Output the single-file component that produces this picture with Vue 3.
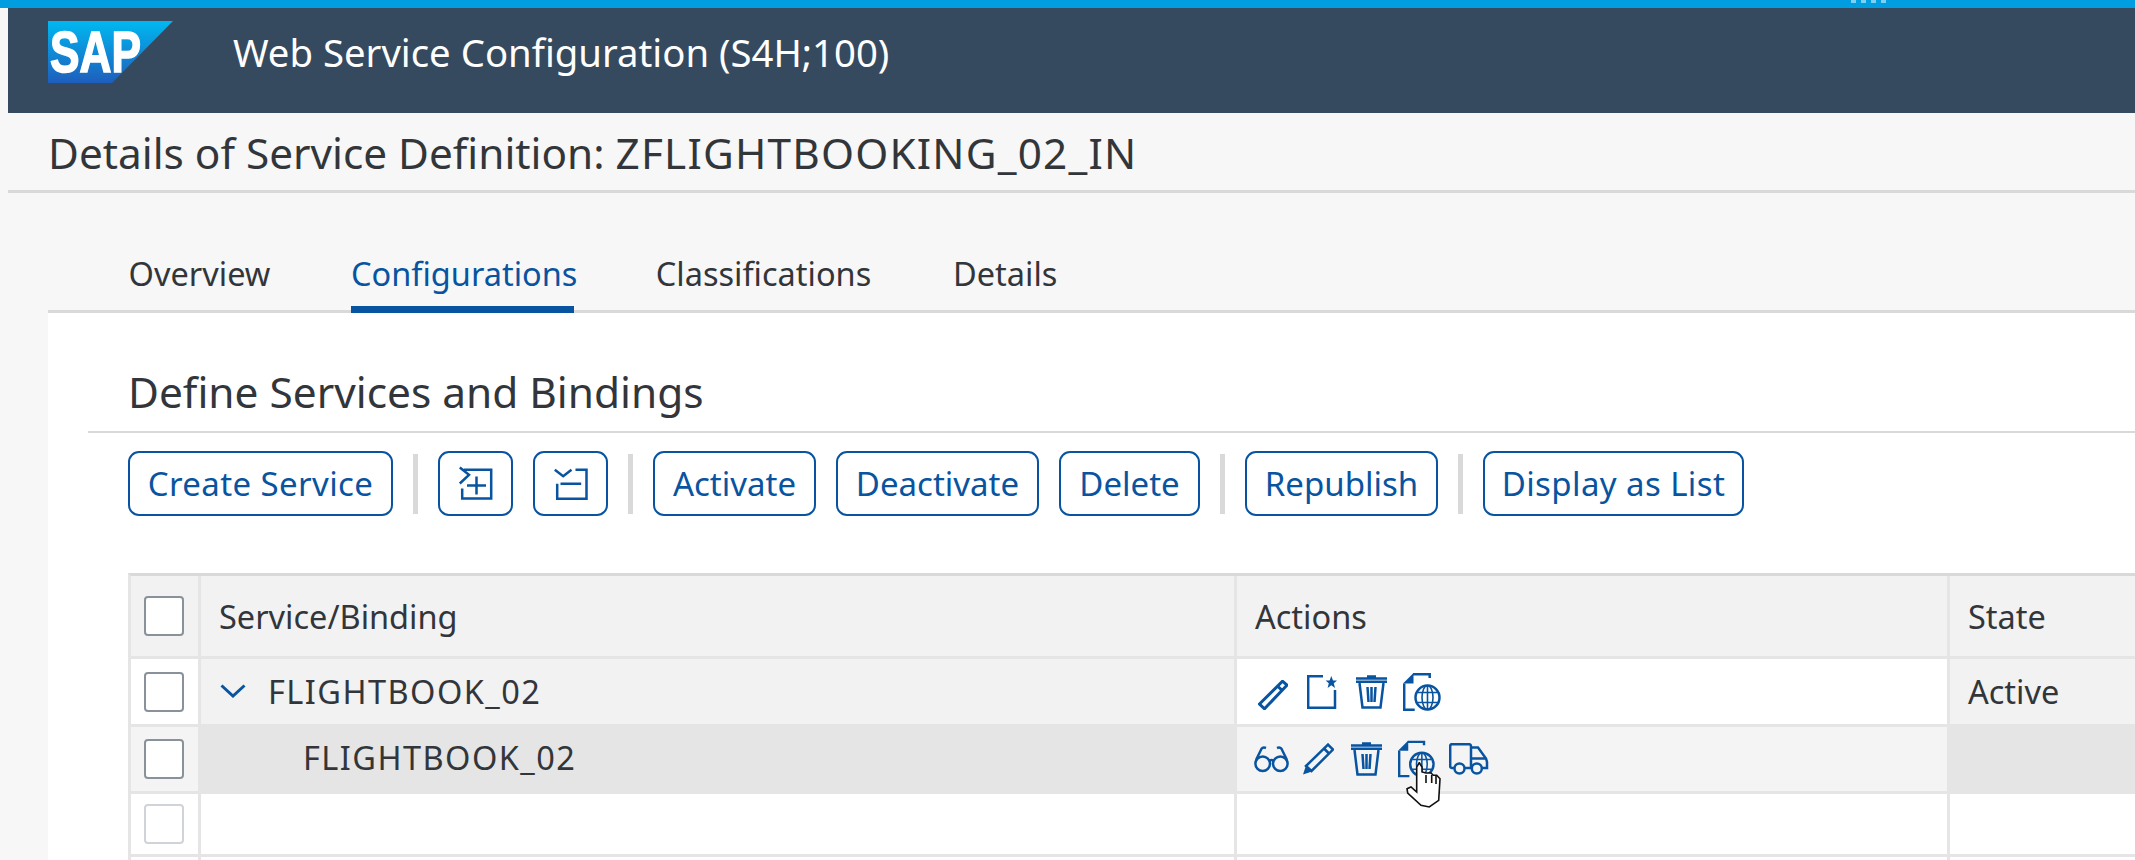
<template>
  <div class="page">
    <div class="accent">
      <span v-for="n in 4" :key="n" class="dot"></span>
    </div>

    <header class="shell">
      <svg class="logo" width="125" height="62" viewBox="0 0 125 62">
        <defs>
          <linearGradient id="sapBlue" x1="0" y1="0" x2="0" y2="1">
            <stop offset="0" stop-color="#00b8f1" />
            <stop offset="1" stop-color="#1e5ebc" />
          </linearGradient>
        </defs>
        <polygon points="0,0 125,0 64,62 0,62" fill="url(#sapBlue)" />
        <text x="2" y="50.5" class="logo-text" textLength="91" lengthAdjust="spacingAndGlyphs">SAP</text>
      </svg>
      <div class="shell-title">Web Service Configuration (S4H;100)</div>
    </header>

    <div class="subheader">Details of Service Definition: <span class="caps">ZFLIGHTBOOKING_02_IN</span></div>

    <nav class="tabs">
      <div
        v-for="tab in tabs"
        :key="tab.label"
        class="tab"
        :class="{ active: tab.label === 'Configurations' }"
        :style="{ width: tab.width + 'px' }"
      >{{ tab.label }}</div>
    </nav>

    <main class="content">
      <h2 class="section-title">Define Services and Bindings</h2>

      <div class="toolbar">
        <button class="btn w-create">Create Service</button>
        <span class="sep"></span>
        <button class="btn icon-btn">
          <svg width="40" height="40" viewBox="0 0 40 40" class="ico">
            <path d="M3.8 3.5 13 10.8 3.8 19.5M7.8 5.8H35.2V34.5H6.2V24.5M11 21.5H30M20.5 12.5V30.5" />
          </svg>
        </button>
        <button class="btn icon-btn">
          <svg width="40" height="40" viewBox="0 0 40 40" class="ico">
            <path d="M3.8 5.8 12.2 12.2 20.5 5.8M24.5 5.8H35.5V34.8H6.2V19.8M9.5 19.8H30.2" />
          </svg>
        </button>
        <span class="sep"></span>
        <button class="btn w-activate">Activate</button>
        <button class="btn w-deactivate">Deactivate</button>
        <button class="btn w-delete">Delete</button>
        <span class="sep"></span>
        <button class="btn w-republish">Republish</button>
        <span class="sep"></span>
        <button class="btn w-list">Display as List</button>
      </div>

      <div class="table">
        <div class="cell head sel"><span class="check"></span></div>
        <div class="cell head">Service/Binding</div>
        <div class="cell head">Actions</div>
        <div class="cell head last">State</div>

        <div class="cell sel plain"><span class="check"></span></div>
        <div class="cell grey">
          <svg class="chevron" width="26" height="14" viewBox="0 0 26 14">
            <path d="M1.5 1.5 13 12 24.5 1.5" />
          </svg>
          <span class="caps">FLIGHTBOOK_02</span>
        </div>
        <div class="cell plain icons top-row">
          <svg width="30" height="30" viewBox="0 0 30 30" class="ico edge-pen">
            <path d="M1.5 24 24.5 1.2 29 5.2 6.5 28.8ZM19.5 6 24.5 10.8" />
          </svg>
          <svg width="30" height="34" viewBox="0 0 30 34" class="ico">
            <path d="M16 1.2H1.2V32.8H28V15" />
            <polygon class="solid" points="24.3,1 26,5.5 30,5.5 26.8,8.3 28,13 24.3,10.3 20.6,13 21.8,8.3 18.6,5.5 22.6,5.5" />
          </svg>
          <svg width="31" height="34" viewBox="0 0 31 34" class="ico">
            <use href="#trash" />
          </svg>
          <svg width="38" height="38" viewBox="0 0 38 38" class="ico pull">
            <use href="#docglobe" />
          </svg>
        </div>
        <div class="cell grey last">Active</div>

        <div class="cell sel soft"><span class="check"></span></div>
        <div class="cell darker child"><span class="caps">FLIGHTBOOK_02</span></div>
        <div class="cell soft icons second-row">
          <svg width="35" height="27" viewBox="0 0 35 27" class="ico">
            <circle cx="8.7" cy="17.7" r="7.3" />
            <circle cx="26.3" cy="17.7" r="7.3" />
            <path d="M2 14 7.5 2.8Q9 .8 12 2M33 14 27.5 2.8Q26 .8 23 2M15.4 15Q17.5 13 19.6 15" />
          </svg>
          <svg width="31" height="32" viewBox="0 0 31 32" class="ico">
            <path d="M3 23 25 1.6 30 6.6 8.5 28ZM21 5.5 26 10.5" />
            <polygon class="solid" points="0,31.5 3,22.5 9,28.5" />
          </svg>
          <svg width="31" height="34" viewBox="0 0 31 34" class="ico spaced">
            <use href="#trash" />
          </svg>
          <span class="hover-wrap">
            <svg width="37" height="38" viewBox="0 0 38 38" class="ico">
              <use href="#docglobe" />
            </svg>
            <svg class="cursor" width="36" height="46" viewBox="0 0 36 46">
              <path d="M10.7 5V30L5 25 1 26.7 1.7 31 15 43.3 23.3 45 32.7 38.3 34 16.7 30.7 13.3H27.3L25 11H20L16 10V5L13.3 .7Z" />
              <path d="M20 13V21M25.7 13V21M30 14V22" />
            </svg>
          </span>
          <svg width="40" height="32" viewBox="0 0 40 32" class="ico">
            <circle cx="10.5" cy="25.5" r="5" />
            <circle cx="27.8" cy="25.5" r="5" />
            <path d="M5.5 25H3Q1.2 25 1.2 23V3Q1.2 1.2 3 1.2H20Q22 1.2 22 3V25M15.5 25H22.8M22 4.5H29L37 15.5 38 19V25H32.8M22 15.5H37" />
          </svg>
        </div>
        <div class="cell darker last"></div>

        <div class="cell sel plain"><span class="check faded"></span></div>
        <div class="cell plain"></div>
        <div class="cell plain"></div>
        <div class="cell plain last"></div>

        <div class="cell sel plain"></div>
        <div class="cell plain"></div>
        <div class="cell plain"></div>
        <div class="cell plain last"></div>
      </div>
    </main>

    <svg class="defs" width="0" height="0">
      <symbol id="trash" viewBox="0 0 31 34">
        <path d="M11 1.5H20M0 3.5H31M0 6.8H31M3.5 8 6.5 32.5H24.5L27.5 8M11.5 12 12.5 27M15.5 12V27M19.5 12 18.5 27" />
      </symbol>
      <symbol id="docglobe" viewBox="0 0 38 38">
        <path d="M10 1.2H26.7V5M1.2 10.5V36.7H11.7" />
        <polygon class="solid" points="0,10.5 10.5,0 10.5,10.5" />
        <circle cx="24.5" cy="24.5" r="12" />
        <g class="globe-lines">
          <ellipse cx="24.5" cy="24.5" rx="5.5" ry="12" />
          <path d="M24.5 12.5V36.5M14.5 19.5H34.5M14.5 29.5H34.5" />
        </g>
      </symbol>
    </svg>
  </div>
</template>

<script setup>
const tabs = [
  { label: "Overview", width: 143 },
  { label: "Configurations", width: 223 },
  { label: "Classifications", width: 219 },
  { label: "Details", width: 104 },
];
</script>

<style>
html,
body {
  margin: 0;
  background: #f7f7f7;
}
</style>

<style scoped>
.page {
  display: flex;
  flex-direction: column;
  height: 860px;
  overflow: hidden;
  background: #f7f7f7;
  color: #32363a;
  font-family: "Noto Sans", sans-serif;
  font-size: 32.5px;
  font-variant-ligatures: none;
}
.accent {
  display: flex;
  flex: none;
  gap: 5px;
  height: 8px;
  padding-left: 1851px;
  background: #009ee0;
}
.dot {
  width: 5px;
  height: 3px;
  background: #7fd0f0;
}
.shell {
  display: flex;
  flex: none;
  align-items: center;
  height: 105px;
  margin-left: 8px;
  padding-left: 40px;
  background: #354a5f;
}
.logo {
  flex: none;
  margin-top: -18px;
}
.logo-text {
  font-family: "Liberation Sans", sans-serif;
  font-size: 57px;
  font-weight: 700;
  fill: #fff;
  stroke: #fff;
  stroke-width: 1.6;
}
.shell-title {
  margin-left: 60px;
  margin-top: -18px;
  color: #fff;
  font-size: 38.3px;
}
.subheader {
  flex: none;
  height: 77px;
  margin-left: 8px;
  padding-left: 40px;
  border-bottom: 3px solid #d9d9d9;
  font-size: 42.3px;
  line-height: 80px;
}
.caps {
  letter-spacing: 1.46px;
}
.subheader .caps {
  letter-spacing: 1.2px;
}
.tabs {
  display: flex;
  flex: none;
  gap: 80px;
  align-items: flex-end;
  height: 117px;
  margin-left: 48px;
  padding-left: 80px;
  border-bottom: 3px solid #d9d9d9;
}
.tab {
  height: 56px;
  margin-bottom: -3px;
  border-bottom: 7px solid transparent;
  line-height: 48px;
  text-align: center;
  white-space: nowrap;
}
.tab.active {
  border-bottom-color: #0854a0;
  color: #0854a0;
}
.content {
  flex: 1;
  margin-left: 48px;
  padding-left: 40px;
  background: #fff;
}
.section-title {
  height: 120px;
  margin: 0;
  padding-left: 40px;
  border-bottom: 2px solid #d9d9d9;
  box-sizing: border-box;
  font-size: 42.4px;
  font-weight: 400;
  line-height: 157px;
}
.toolbar {
  display: flex;
  gap: 20px;
  align-items: center;
  margin: 18px 0 57px 40px;
}
.btn {
  box-sizing: border-box;
  height: 65px;
  padding: 0;
  border: 2px solid #0854a0;
  border-radius: 11px;
  background: #fff;
  color: #0854a0;
  font: inherit;
  font-size: 33px;
  line-height: 1;
  white-space: nowrap;
}
.w-create {
  width: 265px;
  letter-spacing: 0.4px;
}
.w-activate {
  width: 163px;
}
.w-deactivate {
  width: 203px;
}
.w-delete {
  width: 141px;
}
.w-republish {
  width: 193px;
}
.w-list {
  width: 261px;
  letter-spacing: 0.4px;
}
.icon-btn {
  display: flex;
  align-items: center;
  justify-content: center;
  width: 75px;
}
.sep {
  width: 5px;
  height: 60px;
  background: #d9d9d9;
}
.ico {
  flex: none;
  fill: none;
  stroke: #0854a0;
  stroke-width: 2.5;
}
.ico .solid,
.defs .solid {
  fill: #0854a0;
  stroke: none;
}
.defs {
  position: absolute;
}
.defs path,
.defs circle,
.defs ellipse {
  fill: none;
  stroke: #0854a0;
  stroke-width: 2.5;
}
.defs .globe-lines path,
.defs .globe-lines ellipse {
  stroke-width: 1.6;
}
.edge-pen {
  margin-top: 6px;
  stroke-width: 3;
}
.pull {
  margin-left: -3px;
}
.spaced {
  margin: 0 2px 0 3px;
}
.table {
  display: grid;
  grid-template-columns: 70px 1036px 713px 1fr;
  grid-template-rows: 83px 68px 67px 63px 60px;
  margin-left: 40px;
  border-top: 3px solid #d9d9d9;
  border-left: 3px solid #e5e5e5;
}
.cell {
  display: flex;
  align-items: center;
  box-sizing: border-box;
  padding-left: 18px;
  border-right: 3px solid #e5e5e5;
  border-bottom: 3px solid #e5e5e5;
}
.cell.last {
  border-right: 0;
}
.head {
  background: #f2f2f2;
}
.grey {
  background: #f2f2f2;
  padding-bottom: 1px;
}
.plain {
  background: #fff;
}
.soft {
  background: #f4f4f4;
}
.darker {
  background: #e5e5e5;
}
.child {
  padding-bottom: 3px;
  padding-left: 102px;
}
.sel {
  padding-left: 13px;
}
.check {
  box-sizing: border-box;
  width: 40px;
  height: 40px;
  border: 2px solid #89919a;
  border-radius: 4px;
  background: #fff;
}
.check.faded {
  border-color: #d0d4d8;
}
.chevron {
  flex: none;
  margin: 0 22px 0 1px;
  fill: none;
  stroke: #0854a0;
  stroke-width: 3;
}
.icons {
  padding-left: 21px;
}
.top-row {
  gap: 19px;
}
.second-row {
  gap: 14px;
  padding-left: 17px;
}
.hover-wrap {
  position: relative;
  display: flex;
}
.cursor {
  position: absolute;
  top: 22px;
  left: 8px;
  fill: #fff;
  stroke: #111;
  stroke-width: 1.6;
}
</style>
